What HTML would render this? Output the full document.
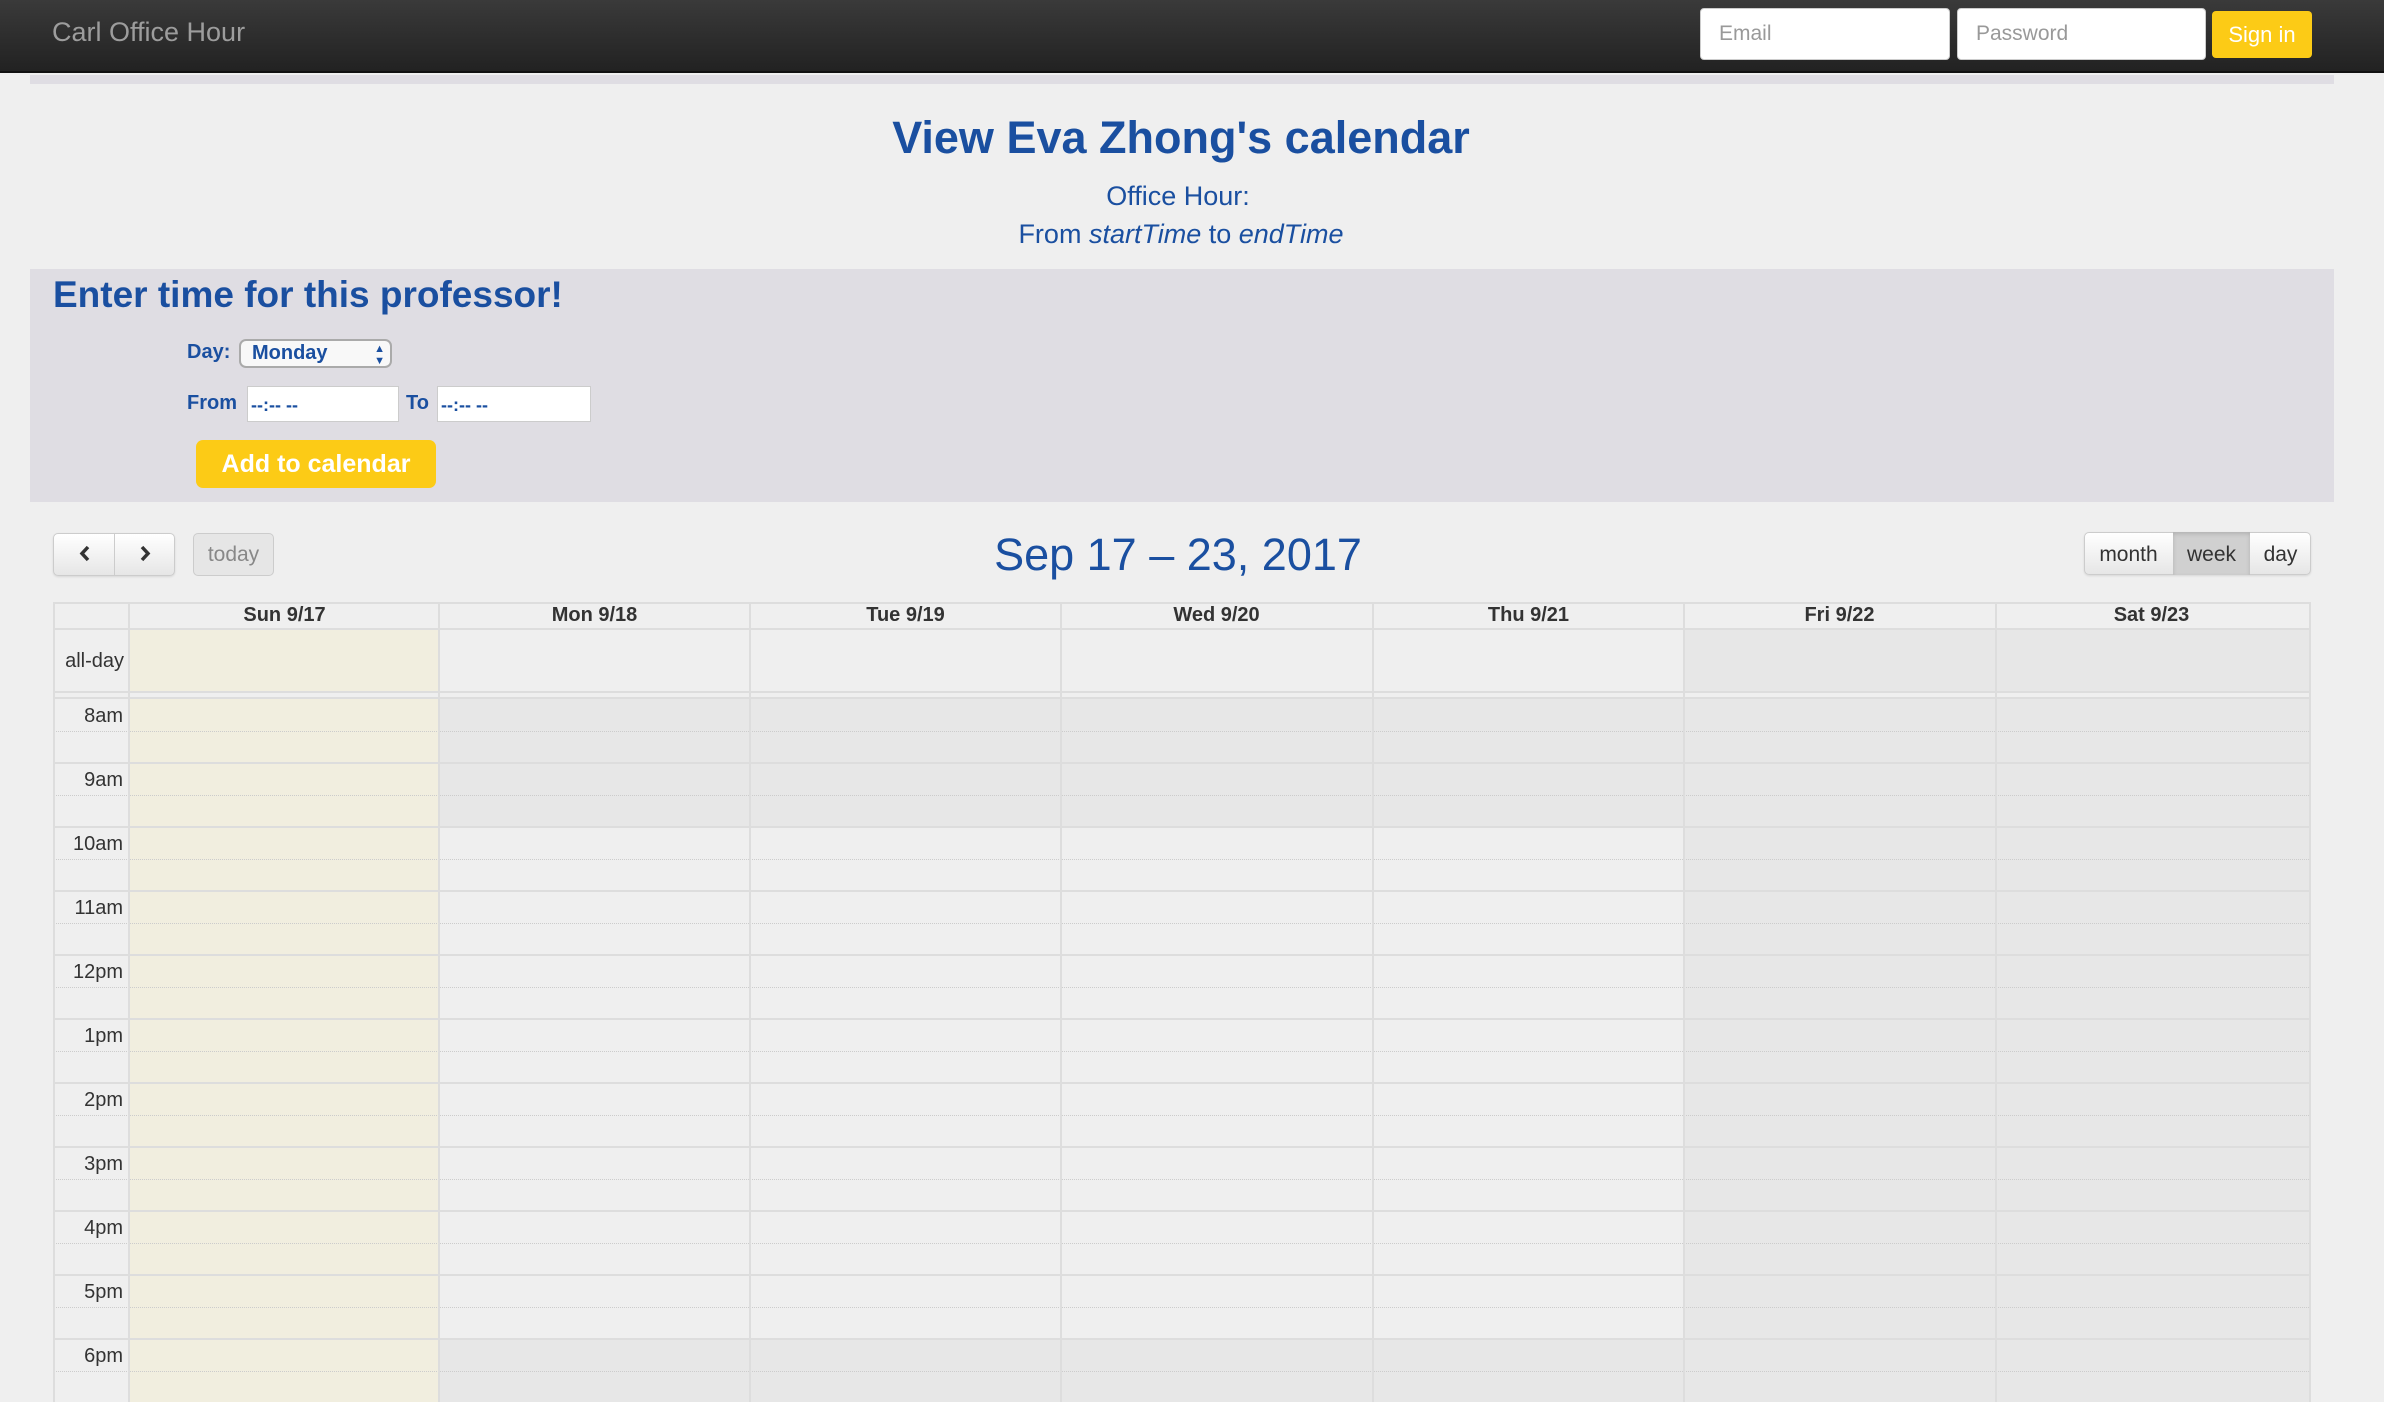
<!DOCTYPE html>
<html><head><meta charset="utf-8"><style>
*{box-sizing:border-box;margin:0;padding:0}
body{width:2384px;height:1402px;overflow:hidden;background:#efefef;font-family:"Liberation Sans",Arial,sans-serif;position:relative}
.a{position:absolute}
.nav{left:0;top:0;width:2384px;height:73px;background:linear-gradient(#3a3a3a,#222);border-bottom:2px solid #111}
.inp{background:#fff;border:1px solid #ccc;border-radius:4px;color:#999;font-size:21px;padding-left:18px;line-height:49px}
.blue{color:#1a4fa0}
.lab{font-size:20px;color:#333;text-align:right;width:70px;left:53px}
.hd{font-size:20px;font-weight:bold;color:#333;text-align:center;top:604px;width:311px}
.btn{border:1px solid #ccc;border-radius:5px;background:linear-gradient(#fff,#e6e6e6);box-shadow:0 1px 2px rgba(0,0,0,.1)}
</style></head><body>
<div class="a nav"></div>
<div class="a" style="left:52px;top:17px;font-size:27px;color:#9d9d9d">Carl Office Hour</div>
<div class="a inp" style="left:1700px;top:8px;width:250px;height:52px">Email</div>
<div class="a inp" style="left:1957px;top:8px;width:249px;height:52px">Password</div>
<div class="a" style="left:2212px;top:11px;width:100px;height:47px;background:#fccb16;border-radius:4px;color:#fff;font-size:22px;text-align:center;line-height:47px">Sign in</div>

<div class="a" style="left:30px;top:75px;width:2304px;height:9px;background:#dfdde3"></div>
<div class="a blue" style="left:0;width:2362px;top:112px;text-align:center;font-size:45px;font-weight:bold">View Eva Zhong's calendar</div>
<div class="a blue" style="left:0;width:2356px;top:181px;text-align:center;font-size:27px">Office Hour:</div>
<div class="a blue" style="left:0;width:2362px;top:219px;text-align:center;font-size:27px">From <i>startTime</i> to <i>endTime</i></div>

<div class="a" style="left:30px;top:269px;width:2304px;height:233px;background:#dfdde3"></div>
<div class="a blue" style="left:53px;top:274px;font-size:37px;font-weight:bold">Enter time for this professor!</div>
<div class="a blue" style="left:187px;top:341px;font-size:20px;font-weight:bold">Day:</div>
<div class="a" style="left:239px;top:339px;width:153px;height:29px;border:2px solid #aaa;border-radius:7px;background:#f8f8f8;color:#1a4fa0;font-size:20px;font-weight:bold;padding-left:11px;line-height:25px">Monday<span style="position:absolute;right:5px;top:0;font-size:11px;line-height:12px;padding-top:2px">▲<br>▼</span></div>
<div class="a blue" style="left:187px;top:392px;font-size:20px;font-weight:bold">From</div>
<div class="a" style="left:247px;top:386px;width:152px;height:36px;background:#fff;border:1px solid #ccc;color:#1a4fa0;font-size:18px;font-weight:bold;padding:8px 3px">--:-- --</div>
<div class="a blue" style="left:406px;top:392px;font-size:20px;font-weight:bold">To</div>
<div class="a" style="left:437px;top:386px;width:154px;height:36px;background:#fff;border:1px solid #ccc;color:#1a4fa0;font-size:18px;font-weight:bold;padding:8px 3px">--:-- --</div>
<div class="a" style="left:196px;top:440px;width:240px;height:48px;background:#fccb16;border-radius:7px;color:#fff;font-size:25px;font-weight:bold;text-align:center;line-height:48px">Add to calendar</div>

<div class="a btn" style="left:53px;top:533px;width:122px;height:43px"></div>
<div class="a" style="left:114px;top:534px;width:1px;height:41px;background:#ccc"></div>
<svg class="a" style="left:53px;top:533px" width="122" height="43"><path d="M35 14 L29 20.5 L35 27 M89 14 L95 20.5 L89 27" stroke="#333" stroke-width="3.5" fill="none"/></svg>
<div class="a" style="left:193px;top:533px;width:81px;height:43px;border:1px solid #ccc;border-radius:5px;background:#e6e6e6;color:#888;font-size:21px;text-align:center;line-height:41px">today</div>
<div class="a blue" style="left:0;width:2356px;top:529px;text-align:center;font-size:45px">Sep 17 – 23, 2017</div>
<div class="a btn" style="left:2084px;top:532px;width:227px;height:43px"></div>
<div class="a" style="left:2173px;top:532px;width:77px;height:43px;background:#d0d0d0;box-shadow:inset 0 2px 4px rgba(0,0,0,.15)"></div>
<div class="a" style="left:2084px;top:543px;width:89px;text-align:center;font-size:21px;color:#333">month</div>
<div class="a" style="left:2173px;top:543px;width:77px;text-align:center;font-size:21px;color:#333">week</div>
<div class="a" style="left:2250px;top:543px;width:61px;text-align:center;font-size:21px;color:#333">day</div>

<div class="a" style="left:129px;top:629px;width:310px;height:773px;background:#f1eedf"></div>
<div class="a" style="left:439px;top:699px;width:1245px;height:128px;background:#e7e7e7"></div>
<div class="a" style="left:439px;top:1339px;width:1245px;height:63px;background:#e7e7e7"></div>
<div class="a" style="left:1684px;top:629px;width:626px;height:773px;background:#e7e7e7"></div>
<div class="a" style="left:129px;top:692px;width:2181px;height:7px;background:#efefef"></div>

<div class="a" style="left:53px;top:602px;width:2258px;height:2px;background:#ddd"></div>
<div class="a" style="left:53px;top:628px;width:2258px;height:2px;background:#ddd"></div>
<div class="a" style="left:53px;top:691px;width:2258px;height:2px;background:#ddd"></div>
<div class="a" style="left:53px;top:697px;width:2258px;height:2px;background:#ddd"></div>
<div class="a" style="left:53px;top:762px;width:2258px;height:2px;background:#ddd"></div>
<div class="a" style="left:53px;top:826px;width:2258px;height:2px;background:#ddd"></div>
<div class="a" style="left:53px;top:890px;width:2258px;height:2px;background:#ddd"></div>
<div class="a" style="left:53px;top:954px;width:2258px;height:2px;background:#ddd"></div>
<div class="a" style="left:53px;top:1018px;width:2258px;height:2px;background:#ddd"></div>
<div class="a" style="left:53px;top:1082px;width:2258px;height:2px;background:#ddd"></div>
<div class="a" style="left:53px;top:1146px;width:2258px;height:2px;background:#ddd"></div>
<div class="a" style="left:53px;top:1210px;width:2258px;height:2px;background:#ddd"></div>
<div class="a" style="left:53px;top:1274px;width:2258px;height:2px;background:#ddd"></div>
<div class="a" style="left:53px;top:1338px;width:2258px;height:2px;background:#ddd"></div>
<div class="a" style="left:53px;top:731px;width:2258px;border-top:1px dotted #ccc"></div>
<div class="a" style="left:53px;top:795px;width:2258px;border-top:1px dotted #ccc"></div>
<div class="a" style="left:53px;top:859px;width:2258px;border-top:1px dotted #ccc"></div>
<div class="a" style="left:53px;top:923px;width:2258px;border-top:1px dotted #ccc"></div>
<div class="a" style="left:53px;top:987px;width:2258px;border-top:1px dotted #ccc"></div>
<div class="a" style="left:53px;top:1051px;width:2258px;border-top:1px dotted #ccc"></div>
<div class="a" style="left:53px;top:1115px;width:2258px;border-top:1px dotted #ccc"></div>
<div class="a" style="left:53px;top:1179px;width:2258px;border-top:1px dotted #ccc"></div>
<div class="a" style="left:53px;top:1243px;width:2258px;border-top:1px dotted #ccc"></div>
<div class="a" style="left:53px;top:1307px;width:2258px;border-top:1px dotted #ccc"></div>
<div class="a" style="left:53px;top:1371px;width:2258px;border-top:1px dotted #ccc"></div>

<div class="a" style="left:53px;top:602px;width:2px;height:800px;background:#ddd"></div>
<div class="a" style="left:128px;top:602px;width:2px;height:800px;background:#ddd"></div>
<div class="a" style="left:438px;top:602px;width:2px;height:800px;background:#ddd"></div>
<div class="a" style="left:749px;top:602px;width:2px;height:800px;background:#ddd"></div>
<div class="a" style="left:1060px;top:602px;width:2px;height:800px;background:#ddd"></div>
<div class="a" style="left:1372px;top:602px;width:2px;height:800px;background:#ddd"></div>
<div class="a" style="left:1683px;top:602px;width:2px;height:800px;background:#ddd"></div>
<div class="a" style="left:1995px;top:602px;width:2px;height:800px;background:#ddd"></div>
<div class="a" style="left:2309px;top:602px;width:2px;height:800px;background:#ddd"></div>

<div class="a hd" style="left:129px">Sun 9/17</div>
<div class="a hd" style="left:439px">Mon 9/18</div>
<div class="a hd" style="left:750px">Tue 9/19</div>
<div class="a hd" style="left:1061px">Wed 9/20</div>
<div class="a hd" style="left:1373px">Thu 9/21</div>
<div class="a hd" style="left:1684px">Fri 9/22</div>
<div class="a hd" style="left:1996px">Sat 9/23</div>

<div class="a lab" style="top:650px;width:71px">all-day</div>
<div class="a lab" style="top:705px">8am</div>
<div class="a lab" style="top:769px">9am</div>
<div class="a lab" style="top:833px">10am</div>
<div class="a lab" style="top:897px">11am</div>
<div class="a lab" style="top:961px">12pm</div>
<div class="a lab" style="top:1025px">1pm</div>
<div class="a lab" style="top:1089px">2pm</div>
<div class="a lab" style="top:1153px">3pm</div>
<div class="a lab" style="top:1217px">4pm</div>
<div class="a lab" style="top:1281px">5pm</div>
<div class="a lab" style="top:1345px">6pm</div>
</body></html>
